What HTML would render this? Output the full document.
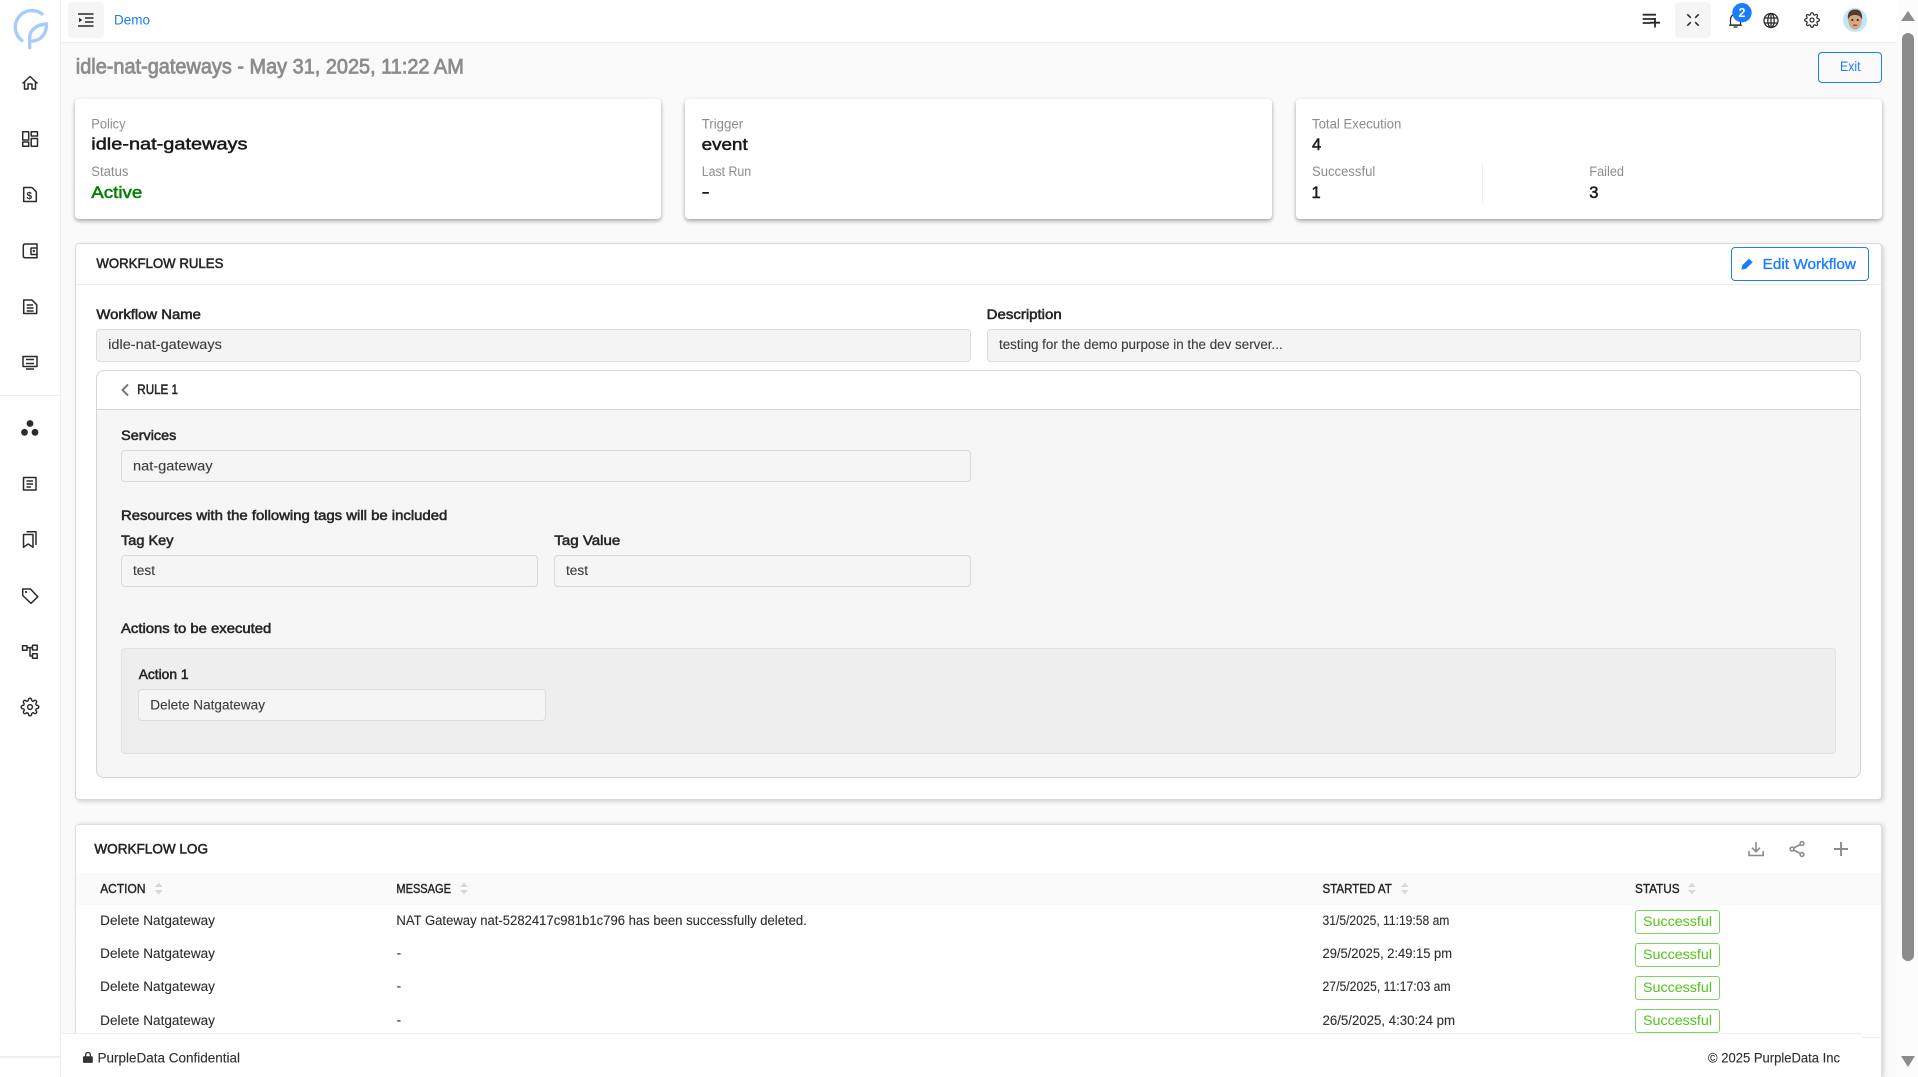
<!DOCTYPE html>
<html lang="en"><head><meta charset="utf-8"><title>idle-nat-gateways</title>
<style>
html,body{margin:0;padding:0;width:1918px;height:1077px;overflow:hidden;background:#fafafa}
#root{position:relative;width:1918px;height:1077px;overflow:hidden;background:#fafafa}
.b{position:absolute;box-sizing:border-box}
svg{position:absolute;left:0;top:0}
text{font-family:"Liberation Sans",sans-serif;white-space:pre}
.l{font-size:13.5px;fill:#8c8c8c}
.v{font-size:16.5px;fill:#1a1a1a;stroke:#1a1a1a;stroke-width:.5px}
.h{font-size:14px;fill:#262626;stroke:#262626;stroke-width:.55px}
.i{font-size:13.5px;fill:#3d3d3d;stroke:#3d3d3d;stroke-width:.12px}
.t{font-size:13.5px;fill:#2f2f2f;stroke:#2f2f2f;stroke-width:.12px}
.th{font-size:12.5px;fill:#262626;stroke:#262626;stroke-width:.4px}
.s{font-size:13.5px;fill:#52c41a}
.ic{fill:none;stroke:#2b2b2b;stroke-width:1.5}
</style></head><body><div id="root">
<!-- sidebar / topbar -->
<div class="b" style="left:0;top:0;width:61px;height:1077px;background:#fff;border-right:1px solid #f0f0f0"></div>
<div class="b" style="left:0;top:395px;width:60px;height:1px;background:#eee"></div>
<div class="b" style="left:0;top:1056px;width:60px;height:2px;background:#eee"></div>
<div class="b" style="left:61px;top:0;width:1836px;height:43px;background:#fff;border-bottom:1px solid #eee"></div>
<div class="b" style="left:68px;top:2px;width:36px;height:36px;background:#f5f5f5;border-radius:4px"></div>
<div class="b" style="left:1675px;top:2px;width:36px;height:36px;background:#f5f5f5;border-radius:4px"></div>
<div class="b" style="left:1818px;top:52px;width:64px;height:31px;border:1px solid #1a7dff;border-radius:4px"></div>
<!-- summary cards -->
<div class="b" style="left:75px;top:99px;width:586px;height:120px;background:#fff;border-radius:4px;box-shadow:0 2px 4px rgba(0,0,0,.35)"></div>
<div class="b" style="left:685px;top:99px;width:587px;height:120px;background:#fff;border-radius:4px;box-shadow:0 2px 4px rgba(0,0,0,.35)"></div>
<div class="b" style="left:1296px;top:99px;width:586px;height:120px;background:#fff;border-radius:4px;box-shadow:0 2px 4px rgba(0,0,0,.35)"></div>
<div class="b" style="left:1482px;top:163px;width:1px;height:40px;background:#eee"></div>
<!-- rules card -->
<div class="b" style="left:75px;top:243px;width:1807px;height:557px;background:#fff;border:1px solid #d9d9d9;border-radius:4px;box-shadow:2px 2px 4px rgba(0,0,0,.15)"></div>
<div class="b" style="left:76px;top:284px;width:1805px;height:1px;background:#eee"></div>
<div class="b" style="left:1731px;top:247px;width:138px;height:34px;border:1px solid #1a7dff;border-radius:4px;background:#fff"></div>
<div class="b" style="left:96px;top:329px;width:875px;height:33px;background:#f4f4f4;border:1px solid #dcdcdc;border-radius:4px"></div>
<div class="b" style="left:987px;top:329px;width:874px;height:33px;background:#f4f4f4;border:1px solid #dcdcdc;border-radius:4px"></div>
<div class="b" style="left:96px;top:370px;width:1765px;height:408px;background:#f6f6f6;border:1px solid #d4d4d4;border-radius:8px"></div>
<div class="b" style="left:97px;top:371px;width:1763px;height:39px;background:#fff;border-bottom:1px solid #d4d4d4;border-radius:8px 8px 0 0"></div>
<div class="b" style="left:121px;top:450px;width:850px;height:32px;background:#f5f5f5;border:1px solid #d9d9d9;border-radius:4px"></div>
<div class="b" style="left:121px;top:555px;width:417px;height:32px;background:#f5f5f5;border:1px solid #d9d9d9;border-radius:4px"></div>
<div class="b" style="left:554px;top:555px;width:417px;height:32px;background:#f5f5f5;border:1px solid #d9d9d9;border-radius:4px"></div>
<div class="b" style="left:121px;top:648px;width:1715px;height:106px;background:#eee;border:1px solid #e3e3e3;border-radius:4px"></div>
<div class="b" style="left:138px;top:689px;width:408px;height:32px;background:#f5f5f5;border:1px solid #dcdcdc;border-radius:4px"></div>
<!-- log card -->
<div class="b" style="left:75px;top:824px;width:1807px;height:253px;background:#fff;border:1px solid #e0e0e0;border-bottom:none;border-radius:4px 4px 0 0;box-shadow:2px 0 4px rgba(0,0,0,.15)"></div>
<div class="b" style="left:76px;top:873px;width:1805px;height:32px;background:#fafafa"></div>
<div class="b" style="left:76px;top:938px;width:1805px;height:1px;background:#fcfcfc"></div>
<div class="b" style="left:76px;top:971px;width:1805px;height:1px;background:#fcfcfc"></div>
<div class="b" style="left:76px;top:1004px;width:1805px;height:1px;background:#fcfcfc"></div>
<div class="b" style="left:1635px;top:910px;width:85px;height:24px;border:1px solid #7ad65f;border-radius:3px"></div>
<div class="b" style="left:1635px;top:943px;width:85px;height:24px;border:1px solid #7ad65f;border-radius:3px"></div>
<div class="b" style="left:1635px;top:976px;width:85px;height:24px;border:1px solid #7ad65f;border-radius:3px"></div>
<div class="b" style="left:1635px;top:1009px;width:85px;height:24px;border:1px solid #7ad65f;border-radius:3px"></div>
<div class="b" style="left:1862px;top:1037px;width:19px;height:1px;background:#eee"></div>
<!-- footer -->
<div class="b" style="left:61px;top:1033px;width:1801px;height:44px;background:#fff;border-top:1px solid #eee"></div>
<!-- scrollbar -->
<div class="b" style="left:1897px;top:0;width:21px;height:1077px;background:#fcfcfc"></div>
<div class="b" style="left:1902px;top:33px;width:12px;height:928px;background:#8c8c8c;border-radius:6px"></div>

<svg width="1918" height="1077" viewBox="0 0 1918 1077" xmlns="http://www.w3.org/2000/svg">
<defs>
<path id="gear" d="M19.4 15a1.65 1.65 0 0 0 .33 1.82l.06.06a2 2 0 0 1 0 2.83 2 2 0 0 1-2.83 0l-.06-.06a1.65 1.65 0 0 0-1.82-.33 1.65 1.65 0 0 0-1 1.51V21a2 2 0 0 1-2 2 2 2 0 0 1-2-2v-.09A1.65 1.65 0 0 0 9 19.4a1.65 1.65 0 0 0-1.82.33l-.06.06a2 2 0 0 1-2.83 0 2 2 0 0 1 0-2.83l.06-.06a1.65 1.65 0 0 0 .33-1.82 1.65 1.65 0 0 0-1.51-1H3a2 2 0 0 1-2-2 2 2 0 0 1 2-2h.09A1.65 1.65 0 0 0 4.6 9a1.65 1.65 0 0 0-.33-1.82l-.06-.06a2 2 0 0 1 0-2.83 2 2 0 0 1 2.83 0l.06.06a1.65 1.65 0 0 0 1.82.33H9a1.65 1.65 0 0 0 1-1.51V3a2 2 0 0 1 2-2 2 2 0 0 1 2 2v.09a1.65 1.65 0 0 0 1 1.51 1.65 1.65 0 0 0 1.82-.33l.06-.06a2 2 0 0 1 2.83 0 2 2 0 0 1 0 2.83l-.06.06a1.65 1.65 0 0 0-.33 1.82V9a1.65 1.65 0 0 0 1.51 1H21a2 2 0 0 1 2 2 2 2 0 0 1-2 2h-.09a1.65 1.65 0 0 0-1.51 1z M15 12a3 3 0 1 1-6 0 3 3 0 0 1 6 0z"/>
</defs>
<!-- logo -->
<g fill="none" stroke="#a6ccff" stroke-width="3.4" stroke-linecap="round">
<path d="M42 14A16.5 16.5 0 1 0 21.8 40.4"/>
<path d="M29.7 47.5V37C29.7 30 37 24.5 46.5 24C46.5 33 42 40 33 41"/>
</g>
<!-- sidebar icons -->
<g class="ic" stroke-linejoin="round">
<path d="M22.5 83.5L30 76.5L37.5 83.5M24.5 81.5V89H28V84H32V89H35.5V81.5"/>
<path d="M22.7 131.7H28.7V140H22.7ZM31.2 131.7H37.5V136H31.2ZM22.7 142H28.7V146.3H22.7ZM31.2 138.5H37.5V146.3H31.2Z"/>
<path d="M23.7 187.5H32L36.3 191.8V201.5H23.7Z"/>
<path d="M37 245V244H25Q23.3 244 23.3 246V256Q23.3 257.7 25 257.7H37V245ZM37.4 248H31V254.5H37.4"/>
<path d="M23.7 300H32L36.7 304.7V313.5H23.7ZM26.7 305H33M26.7 308H33.5M26.7 311H33.5"/>
<path d="M23 356.5H37V366.5H23ZM26 369H34M26 359.5H34M26 363.5H34"/>
<path d="M23.5 477.5H36V490H23.5ZM26.5 481H33M26.5 484H33M26.5 487H31"/>
<path d="M23.5 534.5H33V547.3L28.2 544L23.5 547.3ZM26.5 531.7H36V545"/>
<path d="M22.7 589H30.5L37.8 596.8L31 603.3L22.7 595.5Z"/>
<path d="M22.5 645.8H27V650.2H22.5ZM32.5 645.3H37.2V650H32.5ZM32.5 653.7H37.2V658.3H32.5ZM27 647.6H32.5M30 647.6V656H32.5"/>
</g>
<text x="26.5" y="199" font-size="10" font-weight="bold" fill="#2b2b2b">$</text>
<circle cx="33.8" cy="251" r="1.2" fill="#2b2b2b"/>
<circle cx="26" cy="592" r="1.1" fill="#2b2b2b"/>
<circle cx="30" cy="423.5" r="3.4" fill="#2b2b2b"/><circle cx="24.5" cy="432.3" r="3.4" fill="#2b2b2b"/><circle cx="35" cy="432.3" r="3.4" fill="#2b2b2b"/>
<use href="#gear" transform="translate(20.4 697.4) scale(.8)" fill="none" stroke="#2b2b2b" stroke-width="1.8"/>
<!-- menu icon -->
<path d="M78 14H93.5M85 18H93.5M85 22H93.5M78 26H93.5" stroke="#2b2b2b" stroke-width="1.4" fill="none"/>
<path d="M79 17.8L82.3 20L79 22.2Z" fill="#2b2b2b"/>
<!-- top right icons -->
<path d="M1642.7 14.7H1656M1642.7 19H1656M1642.7 23H1650.5M1650 22.7H1660M1655 18V27.5" stroke="#2b2b2b" stroke-width="1.8" fill="none"/>
<path d="M1687.3 14.3L1690.8 17.8M1698.7 14.3L1695.2 17.8M1687.3 25.7L1690.8 22.2M1698.7 25.7L1695.2 22.2" stroke="#2b2b2b" stroke-width="1.6" fill="none"/>
<path d="M1730.5 25V20Q1730.5 14.5 1735.5 14.5Q1740.5 14.5 1740.5 20V25ZM1729 25.3H1742M1733.5 27H1737.5" fill="none" stroke="#2b2b2b" stroke-width="1.2"/>
<circle cx="1742" cy="12.7" r="9.7" fill="#1a7dff"/>
<text x="1742" y="17" font-size="12.5" font-weight="bold" fill="#fff" text-anchor="middle">2</text>
<g fill="none" stroke="#2b2b2b" stroke-width="1.3"><circle cx="1771" cy="20.5" r="7"/><ellipse cx="1771" cy="20.5" rx="3.2" ry="7"/><path d="M1764.5 18H1777.5M1764.5 23H1777.5M1771 13.5V27.5"/></g>
<use href="#gear" transform="translate(1804 12) scale(.667)" fill="none" stroke="#2b2b2b" stroke-width="1.8"/>
<circle cx="1855" cy="20" r="12" fill="#bfe6fb"/>
<ellipse cx="1855" cy="21" rx="6.6" ry="8.5" fill="#d9a583"/>
<path d="M1848 20Q1846.5 9.5 1855.5 9.5Q1863 9.5 1862 20Q1860.5 14.5 1855 15Q1849.5 14.5 1848 20Z" fill="#5a3a28"/>
<circle cx="1852.3" cy="20" r="1.1" fill="#3a2a20"/><circle cx="1857.7" cy="20" r="1.1" fill="#3a2a20"/>
<path d="M1853 25.2H1857" stroke="#7a3a30" stroke-width="1.2"/>
<!-- chevron / pencil -->
<path d="M128 384.5L122.5 390L128 395.5" fill="none" stroke="#777" stroke-width="2"/>
<path d="M1742 269L1742.7 265.5L1749 259.3L1752 262.3L1745.7 268.3Z" fill="#1a7dff" stroke="#1a7dff" stroke-width="1"/>
<!-- log icons -->
<g fill="none" stroke="#8c8c8c" stroke-width="1.6">
<path d="M1756 842V851.5M1752 847.7L1756 851.7L1760 847.7M1749 851V855.5H1763.2V851"/>
<circle cx="1792" cy="849" r="1.9"/><circle cx="1802" cy="843.5" r="1.9"/><circle cx="1802" cy="854.5" r="1.9"/>
<path d="M1793.7 848L1800.3 844.5M1793.7 850L1800.3 853.5"/>
<path d="M1841 842V856M1834 849H1848" stroke-width="1.9"/>
</g>
<!-- sort carets -->
<g fill="#d9d9d9">
<path d="M158.7 882.5L162.7 887H154.7ZM158.7 894.5L162.7 890H154.7Z"/>
<path d="M464 882.5L468 887H460ZM464 894.5L468 890H460Z"/>
<path d="M1404.8 882.5L1408.8 887H1400.8ZM1404.8 894.5L1408.8 890H1400.8Z"/>
<path d="M1691.8 882.5L1695.8 887H1687.8ZM1691.8 894.5L1695.8 890H1687.8Z"/>
</g>
<!-- lock -->
<path d="M85.6 1057V1054.8Q85.6 1052.6 88 1052.6Q90.4 1052.6 90.4 1054.8V1057" fill="none" stroke="#333" stroke-width="1.3"/>
<rect x="83" y="1056.3" width="9.8" height="6.6" rx=".8" fill="#333"/>
<path d="M1908 11L1915 21H1901Z" fill="#8c8c8c"/>
<path d="M1908 1067L1915 1056H1901Z" fill="#8c8c8c"/>

<!-- texts -->
<text x="114" y="24.5" font-size="13.5" fill="#1a7dff" textLength="36" lengthAdjust="spacingAndGlyphs">Demo</text>
<text x="75.8" y="73.5" font-size="21" fill="#8c8c8c" stroke="#8c8c8c" stroke-width=".8" textLength="388" lengthAdjust="spacingAndGlyphs">idle-nat-gateways - May 31, 2025, 11:22 AM</text>
<text x="1840" y="71" font-size="14" fill="#1a7dff" textLength="20.5" lengthAdjust="spacingAndGlyphs">Exit</text>

<text class="l" x="91.3" y="128.5" textLength="34.2" lengthAdjust="spacingAndGlyphs">Policy</text>
<text class="v" x="91.3" y="149.5" textLength="156.2" lengthAdjust="spacingAndGlyphs">idle-nat-gateways</text>
<text class="l" x="91.3" y="176" textLength="37.1" lengthAdjust="spacingAndGlyphs">Status</text>
<text class="v" x="91.3" y="198" style="fill:#008000;stroke:#008000" textLength="51" lengthAdjust="spacingAndGlyphs">Active</text>

<text class="l" x="701.7" y="128.5" textLength="41.5" lengthAdjust="spacingAndGlyphs">Trigger</text>
<text class="v" x="701.7" y="150" textLength="46" lengthAdjust="spacingAndGlyphs">event</text>
<text class="l" x="701.7" y="176" textLength="49.5" lengthAdjust="spacingAndGlyphs">Last Run</text>
<text class="v" x="701.7" y="197.5" textLength="8" lengthAdjust="spacingAndGlyphs">-</text>

<text class="l" x="1312" y="128.5" textLength="89.3" lengthAdjust="spacingAndGlyphs">Total Execution</text>
<text class="v" x="1312" y="150">4</text>
<text class="l" x="1312" y="176" textLength="63.3" lengthAdjust="spacingAndGlyphs">Successful</text>
<text class="v" x="1311.5" y="198">1</text>
<text class="l" x="1589.3" y="176" textLength="34.7" lengthAdjust="spacingAndGlyphs">Failed</text>
<text class="v" x="1589.3" y="198">3</text>

<text class="h" x="96.4" y="268" textLength="127" lengthAdjust="spacingAndGlyphs">WORKFLOW RULES</text>
<text x="1762.7" y="269" font-size="15" fill="#1a7dff" stroke="#1a7dff" stroke-width=".35" textLength="93.3" lengthAdjust="spacingAndGlyphs">Edit Workflow</text>

<text class="h" x="96.4" y="319" textLength="104.5" lengthAdjust="spacingAndGlyphs">Workflow Name</text>
<text class="h" x="986.7" y="319" textLength="75" lengthAdjust="spacingAndGlyphs">Description</text>
<text class="i" x="108.2" y="349" textLength="113.7" lengthAdjust="spacingAndGlyphs">idle-nat-gateways</text>
<text class="i" x="999" y="349" textLength="283.7" lengthAdjust="spacingAndGlyphs">testing for the demo purpose in the dev server...</text>

<text class="h" x="137.3" y="394" textLength="40.7" lengthAdjust="spacingAndGlyphs">RULE 1</text>
<text class="h" x="121.2" y="440" textLength="55.1" lengthAdjust="spacingAndGlyphs">Services</text>
<text class="i" x="133" y="470.5" textLength="79.5" lengthAdjust="spacingAndGlyphs">nat-gateway</text>
<text class="h" x="121" y="520" textLength="326.3" lengthAdjust="spacingAndGlyphs">Resources with the following tags will be included</text>
<text class="h" x="121" y="545" textLength="52.5" lengthAdjust="spacingAndGlyphs">Tag Key</text>
<text class="h" x="554.3" y="545" textLength="66" lengthAdjust="spacingAndGlyphs">Tag Value</text>
<text class="i" x="133" y="575" textLength="22" lengthAdjust="spacingAndGlyphs">test</text>
<text class="i" x="566" y="575" textLength="22" lengthAdjust="spacingAndGlyphs">test</text>
<text class="h" x="121" y="633" textLength="150.3" lengthAdjust="spacingAndGlyphs">Actions to be executed</text>
<text class="h" x="138.7" y="679" textLength="49.8" lengthAdjust="spacingAndGlyphs">Action 1</text>
<text class="i" x="150.3" y="709.5" textLength="114.7" lengthAdjust="spacingAndGlyphs">Delete Natgateway</text>

<text class="h" x="94.4" y="853.5" textLength="113.6" lengthAdjust="spacingAndGlyphs">WORKFLOW LOG</text>
<text class="th" x="100.2" y="893" textLength="45.3" lengthAdjust="spacingAndGlyphs">ACTION</text>
<text class="th" x="396.4" y="893" textLength="54.6" lengthAdjust="spacingAndGlyphs">MESSAGE</text>
<text class="th" x="1322.5" y="893" textLength="69.3" lengthAdjust="spacingAndGlyphs">STARTED AT</text>
<text class="th" x="1635" y="893" textLength="44.6" lengthAdjust="spacingAndGlyphs">STATUS</text>

<text class="t" x="100.2" y="925" textLength="114.8" lengthAdjust="spacingAndGlyphs">Delete Natgateway</text>
<text class="t" x="396.4" y="925" textLength="410.4" lengthAdjust="spacingAndGlyphs">NAT Gateway nat-5282417c981b1c796 has been successfully deleted.</text>
<text class="t" x="1322.5" y="925" textLength="126.9" lengthAdjust="spacingAndGlyphs">31/5/2025, 11:19:58 am</text>
<text class="s" x="1643" y="926" textLength="69" lengthAdjust="spacingAndGlyphs">Successful</text>

<text class="t" x="100.2" y="958" textLength="114.8" lengthAdjust="spacingAndGlyphs">Delete Natgateway</text>
<text class="t" x="396.6" y="957.5" textLength="4.5" lengthAdjust="spacingAndGlyphs">-</text>
<text class="t" x="1322.5" y="958" textLength="129.5" lengthAdjust="spacingAndGlyphs">29/5/2025, 2:49:15 pm</text>
<text class="s" x="1643" y="959" textLength="69" lengthAdjust="spacingAndGlyphs">Successful</text>

<text class="t" x="100.2" y="991" textLength="114.8" lengthAdjust="spacingAndGlyphs">Delete Natgateway</text>
<text class="t" x="396.6" y="990.5" textLength="4.5" lengthAdjust="spacingAndGlyphs">-</text>
<text class="t" x="1322.5" y="991" textLength="128.1" lengthAdjust="spacingAndGlyphs">27/5/2025, 11:17:03 am</text>
<text class="s" x="1643" y="992" textLength="69" lengthAdjust="spacingAndGlyphs">Successful</text>

<text class="t" x="100.2" y="1025" textLength="114.8" lengthAdjust="spacingAndGlyphs">Delete Natgateway</text>
<text class="t" x="396.6" y="1024.5" textLength="4.5" lengthAdjust="spacingAndGlyphs">-</text>
<text class="t" x="1322.5" y="1025" textLength="132.5" lengthAdjust="spacingAndGlyphs">26/5/2025, 4:30:24 pm</text>
<text class="s" x="1643" y="1025" textLength="69" lengthAdjust="spacingAndGlyphs">Successful</text>

<text class="t" x="97.5" y="1062.5" textLength="142.5" lengthAdjust="spacingAndGlyphs">PurpleData Confidential</text>
<text class="t" x="1708" y="1062.5" textLength="132" lengthAdjust="spacingAndGlyphs">© 2025 PurpleData Inc</text>
</svg>
</div></body></html>
